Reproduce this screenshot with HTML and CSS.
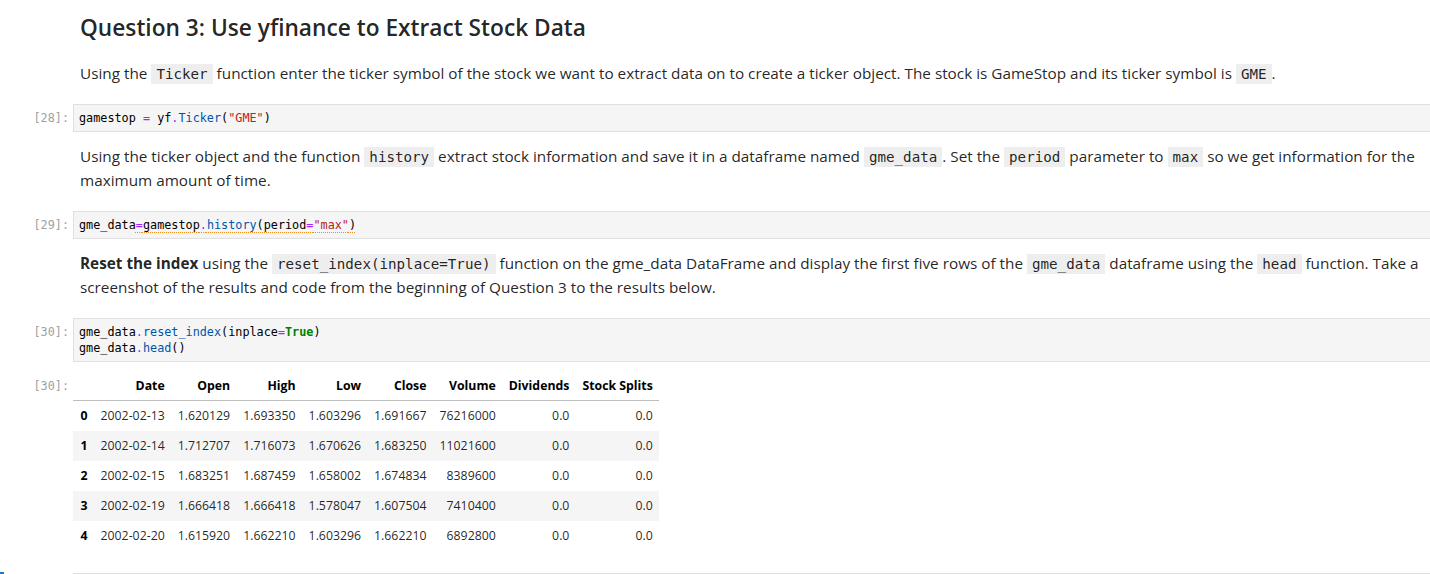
FILE: index.html
```html
<!DOCTYPE html>
<html lang="en">
<head>
<meta charset="utf-8">
<title>Question 3</title>
<link rel="stylesheet" href="styles.css">
</head>
<body>
<div class="notebook">

  <div class="cell md first">
    <div class="prompt"></div>
    <div class="md-body">
      <h2>Question 3: Use yfinance to Extract Stock Data</h2>
      <p>Using the <code>Ticker</code> function enter the ticker symbol of the stock we want to extract data on to create a ticker object. The stock is GameStop and its ticker symbol is <code>GME</code>.</p>
    </div>
  </div>

  <div class="cell code">
    <div class="prompt">[28]:</div>
    <div class="editor"><pre>gamestop <span class="op">=</span> yf<span class="op">.</span><span class="prop">Ticker</span>(<span class="str">"GME"</span>)</pre></div>
  </div>

  <div class="cell md">
    <div class="prompt"></div>
    <div class="md-body">
      <p>Using the ticker object and the function <code>history</code> extract stock information and save it in a dataframe named <code>gme_data</code>. Set the <code>period</code> parameter to <code>max</code> so we get information for the maximum amount of time.</p>
    </div>
  </div>

  <div class="cell code">
    <div class="prompt">[29]:</div>
    <div class="editor"><pre>gme_data<span class="lint"><span class="op">=</span>gamestop<span class="op">.</span><span class="prop">history</span>(period<span class="op">=</span><span class="str">"max"</span>)</span></pre></div>
  </div>

  <div class="cell md">
    <div class="prompt"></div>
    <div class="md-body">
      <p><strong>Reset the index</strong> using the <code>reset_index(inplace=True)</code> function on the gme_data DataFrame and display the first five rows of the <code>gme_data</code> dataframe using the <code>head</code> function. Take a screenshot of the results and code from the beginning of Question 3 to the results below.</p>
    </div>
  </div>

  <div class="cell code">
    <div class="prompt">[30]:</div>
    <div class="editor"><pre>gme_data<span class="op">.</span><span class="prop">reset_index</span>(inplace<span class="op">=</span><span class="kw">True</span>)
gme_data<span class="op">.</span><span class="prop">head</span>()</pre></div>
  </div>

  <div class="cell output">
    <div class="prompt">[30]:</div>
    <div class="out-body">
      <table class="dataframe">
        <thead>
          <tr><th></th><th>Date</th><th>Open</th><th>High</th><th>Low</th><th>Close</th><th>Volume</th><th>Dividends</th><th>Stock Splits</th></tr>
        </thead>
        <tbody>
          <tr><th>0</th><td>2002-02-13</td><td>1.620129</td><td>1.693350</td><td>1.603296</td><td>1.691667</td><td>76216000</td><td>0.0</td><td>0.0</td></tr>
          <tr><th>1</th><td>2002-02-14</td><td>1.712707</td><td>1.716073</td><td>1.670626</td><td>1.683250</td><td>11021600</td><td>0.0</td><td>0.0</td></tr>
          <tr><th>2</th><td>2002-02-15</td><td>1.683251</td><td>1.687459</td><td>1.658002</td><td>1.674834</td><td>8389600</td><td>0.0</td><td>0.0</td></tr>
          <tr><th>3</th><td>2002-02-19</td><td>1.666418</td><td>1.666418</td><td>1.578047</td><td>1.607504</td><td>7410400</td><td>0.0</td><td>0.0</td></tr>
          <tr><th>4</th><td>2002-02-20</td><td>1.615920</td><td>1.662210</td><td>1.603296</td><td>1.662210</td><td>6892800</td><td>0.0</td><td>0.0</td></tr>
        </tbody>
      </table>
    </div>
  </div>

  <div class="cell code next">
    <div class="collapser"></div>
    <div class="prompt"></div>
    <div class="editor empty"></div>
  </div>

</div>
</body>
</html>
```

FILE: styles.css
```css
html, body {
  margin: 0;
  padding: 0;
  background: #ffffff;
  overflow: hidden;
}

body {
  font-family: "Open Sans", "Noto Sans", sans-serif;
  color: rgba(0, 0, 0, 0.87);
}

.notebook {
  width: 1445px;
}

.cell {
  display: flex;
  align-items: flex-start;
  position: relative;
}

.prompt {
  flex: 0 0 73px;
  box-sizing: border-box;
  padding-right: 4px;
  text-align: right;
  font-family: "DejaVu Sans Mono", "Liberation Mono", monospace;
  font-size: 11.8px;
  line-height: 16px;
  color: #a0a0a0;
}

/* markdown cells */
.md {
  padding: 12px 0 19px;
}

.md.first {
  padding-top: 13px;
}

.md-body {
  flex: 1 1 auto;
  min-width: 0;
  padding-left: 7px;
}

.md-body h2 {
  margin: 0 0 18px;
  font-size: 22.7px;
  line-height: 30px;
  font-weight: 600;
  color: rgba(0, 0, 0, 0.87);
}

.md-body p {
  margin: 0;
  font-size: 15.3px;
  line-height: 24px;
}

.md-body strong {
  font-weight: 700;
}

.md-body code {
  font-family: "DejaVu Sans Mono", "Liberation Mono", monospace;
  font-size: 14.2px;
  line-height: 1;
  background: #eeeeee;
  padding: 2px 5px;
  color: rgba(0, 0, 0, 0.87);
}

/* code cells */
.code .prompt {
  padding-top: 6px;
}

.editor {
  flex: 1 1 auto;
  min-width: 0;
  background: #f5f5f5;
  border: 1px solid #e0e0e0;
  padding: 5px 6px 5px 5px;
}

.editor pre {
  margin: 0;
  font-family: "DejaVu Sans Mono", "Liberation Mono", monospace;
  font-size: 11.8px;
  line-height: 16px;
  color: #000000;
}

.op { color: #aa22ff; }
.str { color: #ba2121; }
.prop { color: #0055aa; }
.kw { color: #008000; font-weight: 700; }

.lint {
  text-decoration: underline dotted #ef8f1f;
  text-decoration-thickness: 1px;
  text-underline-offset: 3px;
}

/* output */
.output {
  padding-top: 9px;
}

.output .prompt {
  padding-top: 7px;
}

.out-body {
  flex: 1 1 auto;
}

.dataframe {
  border-collapse: collapse;
  border-spacing: 0;
  font-size: 12.3px;
  color: rgba(0, 0, 0, 0.87);
}

.dataframe th,
.dataframe td {
  text-align: right;
  padding: 7px 6.5px;
  line-height: 16px;
  white-space: nowrap;
  vertical-align: middle;
}

.dataframe thead th {
  font-weight: 700;
  color: #000000;
  border-bottom: 1px solid #bdbdbd;
  padding-bottom: 6px;
}

.dataframe tbody th {
  font-weight: 700;
  color: #000000;
  padding-left: 7.5px;
}

.dataframe tbody tr:nth-child(even) {
  background: #f5f5f5;
}

/* next (active) cell */
.next {
  margin-top: 21px;
}

.collapser {
  position: absolute;
  left: 0;
  top: 0;
  width: 4px;
  height: 40px;
  background: #1976d2;
}

.editor.empty {
  margin-top: 1px;
  height: 16px;
}
```
